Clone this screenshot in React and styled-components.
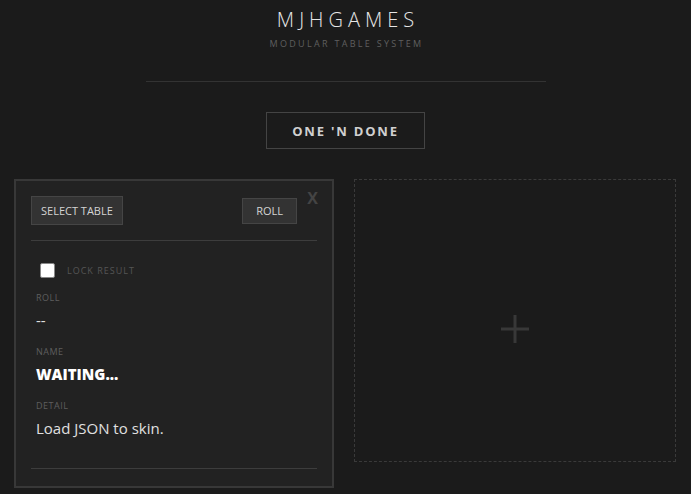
import React from 'react';
import styled, { createGlobalStyle } from 'styled-components';

const GlobalStyle = createGlobalStyle`
  html, body {
    margin: 0;
    padding: 0;
    background: #1b1b1b;
    font-family: "Open Sans", "Noto Sans", sans-serif;
    color: #ddd;
  }
`;

const Page = styled.div`
  min-height: 494px;
  background: #1b1b1b;
`;

const Header = styled.header`
  display: flex;
  flex-direction: column;
  align-items: center;
  padding-top: 6px;
`;

const Title = styled.h1`
  margin: 0;
  font-size: 20px;
  font-weight: 300;
  letter-spacing: 5px;
  padding-left: 5px;
  color: #e6e6e6;
  line-height: 28px;
`;

const Subtitle = styled.div`
  margin-top: 4px;
  font-size: 9px;
  letter-spacing: 2.3px;
  padding-left: 2px;
  color: #5f5f5f;
  line-height: 12px;
`;

const Rule = styled.hr`
  width: 400px;
  margin: 31px auto 30px;
  border: none;
  border-top: 1px solid #333;
`;

const ModeButton = styled.button`
  display: block;
  margin: 0 auto;
  width: 159px;
  height: 37px;
  background: transparent;
  border: 1px solid #444;
  color: #d0d0d0;
  font-family: inherit;
  font-size: 13px;
  font-weight: 700;
  letter-spacing: 1.8px;
`;

const Grid = styled.main`
  display: grid;
  grid-template-columns: 320px 322px;
  gap: 20px;
  align-items: start;
  padding: 30px 14px 0;
`;

const Card = styled.section`
  position: relative;
  background: #222;
  border: 2px solid #383838;
  padding: 15px 15px 17px;
`;

const CloseMark = styled.span`
  position: absolute;
  top: 6px;
  right: 14px;
  font-size: 16px;
  font-weight: 700;
  color: #444;
`;

const Toolbar = styled.div`
  display: flex;
  align-items: center;
  justify-content: space-between;
  margin-right: 20px;
`;

const SmallButton = styled.button`
  height: ${p => p.$tall ? 29 : 26}px;
  padding: 0 ${p => p.$tall ? 9 : 13}px;
  background: #333;
  border: 1px solid #454545;
  color: #d4d4d4;
  font-family: inherit;
  font-size: 11px;
`;

const Divider = styled.div`
  height: 1px;
  background: #3d3d3d;
  margin: ${p => p.$m || '15px 0 0'};
`;

const Body = styled.div`
  padding: 22px 5px 0;
`;

const LockRow = styled.label`
  display: flex;
  align-items: center;
  gap: 12px;
  margin-left: 4px;
`;

const Box = styled.span`
  width: 13px;
  height: 13px;
  background: #fff;
  border: 1px solid #888;
  border-radius: 2px;
`;

const LockText = styled.span`
  font-size: 9px;
  letter-spacing: 1px;
  color: #555;
`;

const Label = styled.div`
  font-size: 9px;
  letter-spacing: 0.5px;
  color: #5e5e5e;
  margin-top: ${p => p.$mt || 15}px;
  line-height: 12px;
`;

const Value = styled.div`
  margin-top: 5px;
  color: ${p => p.$bold ? '#fff' : '#e0e0e0'};
  font-size: 15px;
  font-weight: ${p => p.$bold ? 800 : 400};
  line-height: 22px;
`;

const EmptySlot = styled.div`
  box-sizing: border-box;
  height: 283px;
  padding-top: 16px;
  border: 1px dashed #3a3a3a;
  display: flex;
  align-items: center;
  justify-content: center;
`;

const Plus = () => (
  <svg width="28" height="28" viewBox="0 0 28 28">
    <rect x="12.5" y="0" width="3" height="28" fill="#383838" />
    <rect x="0" y="12.5" width="28" height="3" fill="#383838" />
  </svg>
);

export default function App() {
  return (
    <Page>
      <GlobalStyle />
      <Header>
        <Title>MJHGAMES</Title>
        <Subtitle>MODULAR TABLE SYSTEM</Subtitle>
      </Header>
      <Rule />
      <ModeButton>ONE 'N DONE</ModeButton>
      <Grid>
        <Card>
          <CloseMark>X</CloseMark>
          <Toolbar>
            <SmallButton $tall>SELECT TABLE</SmallButton>
            <SmallButton>ROLL</SmallButton>
          </Toolbar>
          <Divider />
          <Body>
            <LockRow>
              <Box />
              <LockText>LOCK RESULT</LockText>
            </LockRow>
            <Label $mt={14}>ROLL</Label>
            <Value>--</Value>
            <Label>NAME</Label>
            <Value $bold>WAITING...</Value>
            <Label>DETAIL</Label>
            <Value>Load JSON to skin.</Value>
          </Body>
          <Divider $m="29px 0 0" />
        </Card>
        <EmptySlot>
          <Plus />
        </EmptySlot>
      </Grid>
    </Page>
  );
}
